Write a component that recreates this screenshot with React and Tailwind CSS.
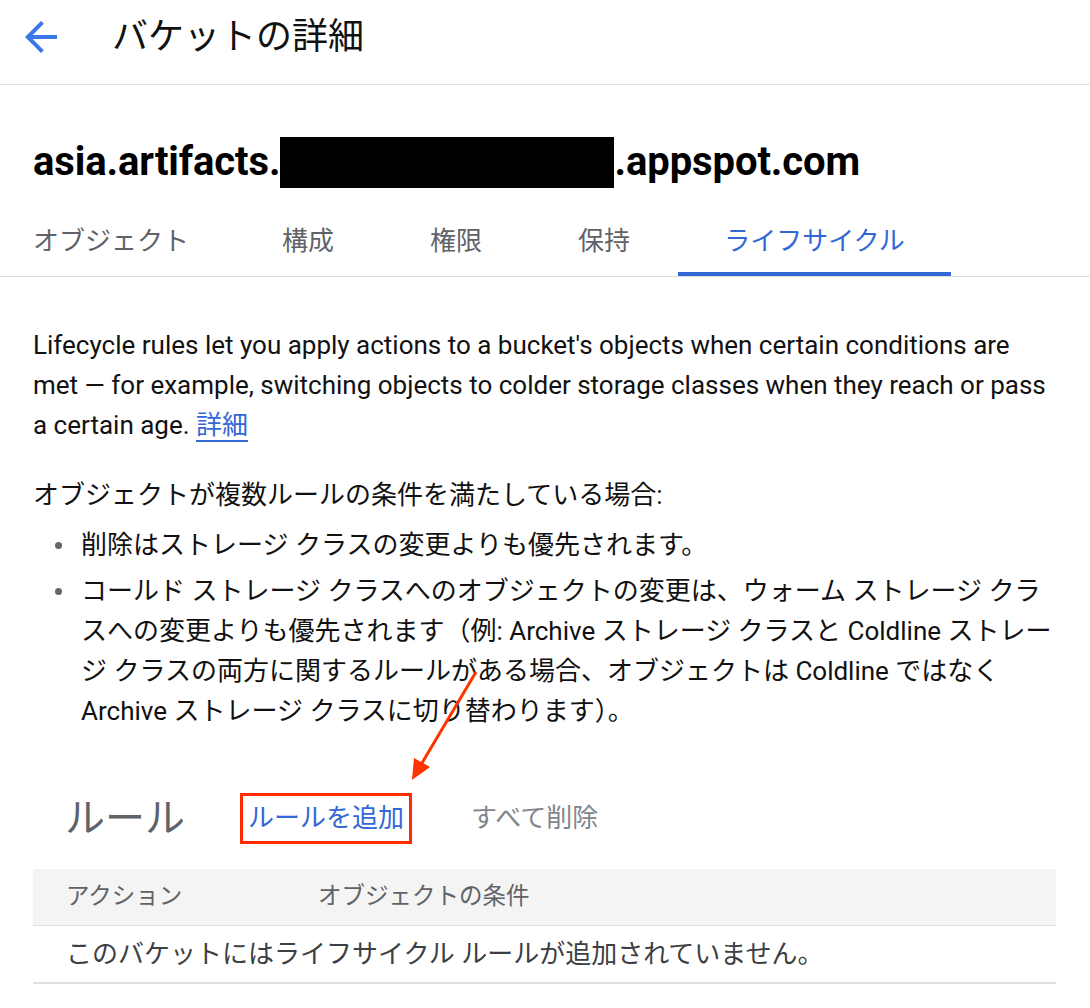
import React from "react";

export default function App() {
  const font = "font-['Roboto','Noto_Sans_CJK_JP',sans-serif]";
  return (
    <div className={`relative w-[1090px] h-[1008px] bg-white overflow-hidden ${font} text-[#202124]`}>
      {/* Header */}
      <div className="flex items-center h-[85px] pb-[11px] border-b border-[#e0e0e0]">
        <div className="ml-[17px] w-[48px] h-[48px] flex items-center justify-center">
          <svg width="48" height="48" viewBox="0 0 24 24">
            <path d="M20 11H7.83l5.59-5.59L12 4l-8 8 8 8 1.41-1.41L7.83 13H20v-2z" fill="#3b78e7" />
          </svg>
        </div>
        <div className="ml-[47px] text-[36px] leading-[44px] text-[#111]">バケットの詳細</div>
      </div>

      {/* Bucket name */}
      <div className="pt-[52px] pl-[33px] flex items-center h-[102px]">
        <span className="text-[40px] leading-[50px] font-bold text-black tracking-[-0.1px]">asia.artifacts.</span>
        <span className="inline-block w-[334px] h-[51px] bg-black"></span>
        <span className="text-[40px] leading-[50px] font-bold text-black tracking-[-0.1px]">.appspot.com</span>
      </div>

      {/* Tabs */}
      <div className="mt-[21px] flex border-b border-[#dadce0] h-[69px]">
        <div className="ml-[33px] w-[201px] h-[68px] pb-[2px] flex items-center text-[26px] text-[#5f6368]">オブジェクト</div>
        <div className="w-[148px] justify-center h-[68px] pb-[2px] flex items-center text-[26px] text-[#5f6368]">構成</div>
        <div className="w-[148px] justify-center h-[68px] pb-[2px] flex items-center text-[26px] text-[#5f6368]">権限</div>
        <div className="w-[148px] justify-center h-[68px] pb-[2px] flex items-center text-[26px] text-[#5f6368]">保持</div>
        <div className="relative w-[273px] justify-center h-[68px] pb-[2px] flex items-center text-[26px] text-[#3367d6]">
          ライフサイクル
          <div className="absolute left-0 right-0 bottom-0 h-[4px] bg-[#3367d6]"></div>
        </div>
      </div>

      {/* Body */}
      <div className="pl-[33px] pr-[33px]">
        <div className="mt-[48px] text-[26px] leading-[40px] text-[#111] flex flex-col">
          <span className="whitespace-nowrap">Lifecycle rules let you apply actions to a bucket's objects when certain conditions are</span>
          <span className="whitespace-nowrap">met — for example, switching objects to colder storage classes when they reach or pass</span>
          <span className="whitespace-nowrap">
            a certain age.{" "}
            <a className="text-[#3367d6] underline decoration-2 underline-offset-[6px]">詳細</a>
          </span>
        </div>

        <p className="mt-[30px] text-[26px] leading-[40px] text-[#111]">オブジェクトが複数ルールの条件を満たしている場合:</p>
        <ul className="mt-[10px] text-[26px] leading-[40px] text-[#111]">
          <li className="flex">
            <span className="w-[48px] flex justify-center pl-[2px] shrink-0"><span className="mt-[17px] w-[7px] h-[7px] rounded-full bg-[#666]"></span></span>
            <span className="whitespace-nowrap">削除はストレージ クラスの変更よりも優先されます。</span>
          </li>
          <li className="flex mt-[6px]">
            <span className="w-[48px] flex justify-center pl-[2px] shrink-0"><span className="mt-[17px] w-[7px] h-[7px] rounded-full bg-[#666]"></span></span>
            <span className="flex flex-col">
              <span className="whitespace-nowrap">コールド ストレージ クラスへのオブジェクトの変更は、ウォーム ストレージ クラ</span>
              <span className="whitespace-nowrap">スへの変更よりも優先されます（例: Archive ストレージ クラスと Coldline ストレー</span>
              <span className="whitespace-nowrap">ジ クラスの両方に関するルールがある場合、オブジェクトは Coldline ではなく</span>
              <span className="whitespace-nowrap">Archive ストレージ クラスに切り替わります）。</span>
            </span>
          </li>
        </ul>

        {/* Rules header */}
        <div className="mt-[62px] flex items-center h-[51px] pl-[32px]">
          <span className="text-[40px] leading-[51px] text-[#5f6368]">ルール</span>
          <span className="ml-[55px] h-[51px] border-[3px] border-[#ff2a00] px-[5px] flex items-center text-[26px] text-[#3367d6]">ルールを追加</span>
          <span className="ml-[59px] text-[26px] text-[#80868b]">すべて削除</span>
        </div>

        {/* Table */}
        <div className="mt-[25px] w-[1023px]">
          <div className="flex items-center h-[57px] bg-[#f4f4f4] border-b border-[#e0e0e0] text-[23.5px] text-[#5f6368]">
            <span className="pl-[33px] w-[285px]">アクション</span>
            <span>オブジェクトの条件</span>
          </div>
          <div className="flex items-center h-[58px] border-b-2 border-[#e0e0e0] pl-[33px] text-[26px] text-[#3c4043]">
            このバケットにはライフサイクル ルールが追加されていません。
          </div>
        </div>
      </div>

      {/* Red annotation arrow */}
      <svg className="absolute left-0 top-0 pointer-events-none" width="1090" height="1008">
        <line x1="476" y1="672" x2="422" y2="763" stroke="#ff3300" strokeWidth="3" />
        <polygon points="412,780 430,767 414,758" fill="#ff3300" />
      </svg>
    </div>
  );
}
